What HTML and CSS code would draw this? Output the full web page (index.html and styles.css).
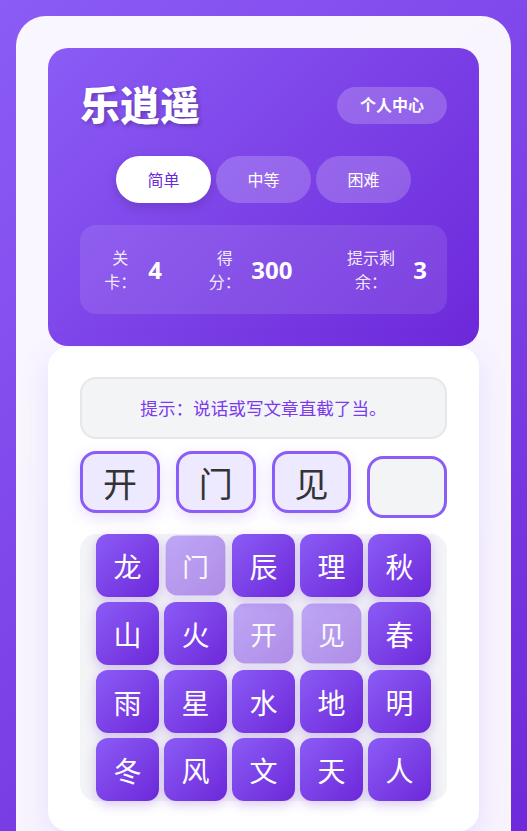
FILE: index.html
```html
<!DOCTYPE html>
<html lang="zh-CN">
<head>
<meta charset="utf-8">
<title>乐逍遥</title>
<link rel="stylesheet" href="styles.css">
</head>
<body>
<div class="app">
  <header class="hero">
    <div class="hero-top">
      <h1 class="title">乐逍遥</h1>
      <button class="profile-btn">个人中心</button>
    </div>
    <div class="levels">
      <button class="level active">简单</button>
      <button class="level">中等</button>
      <button class="level">困难</button>
    </div>
    <div class="stats">
      <div class="stat"><span class="stat-label">关卡：</span><span class="stat-value">4</span></div>
      <div class="stat"><span class="stat-label">得分：</span><span class="stat-value">300</span></div>
      <div class="stat"><span class="stat-label">提示剩余：</span><span class="stat-value">3</span></div>
    </div>
  </header>
  <main class="board">
    <div class="hint">提示：说话或写文章直截了当。</div>
    <div class="slots">
      <div class="slot filled">开</div>
      <div class="slot filled">门</div>
      <div class="slot filled">见</div>
      <div class="slot"></div>
    </div>
    <div class="grid">
      <button class="tile">龙</button>
      <button class="tile used">门</button>
      <button class="tile">辰</button>
      <button class="tile">理</button>
      <button class="tile">秋</button>
      <button class="tile">山</button>
      <button class="tile">火</button>
      <button class="tile used">开</button>
      <button class="tile used">见</button>
      <button class="tile">春</button>
      <button class="tile">雨</button>
      <button class="tile">星</button>
      <button class="tile">水</button>
      <button class="tile">地</button>
      <button class="tile">明</button>
      <button class="tile">冬</button>
      <button class="tile">风</button>
      <button class="tile">文</button>
      <button class="tile">天</button>
      <button class="tile">人</button>
    </div>
  </main>
</div>
</body>
</html>
```
FILE: styles.css
```css
* { box-sizing: border-box; }

html, body { margin: 0; }

body {
  padding: 16px;
  min-height: 100vh;
  background: linear-gradient(135deg, #8b5cf6 0%, #6d28d9 100%);
  font-family: "Noto Sans", "Noto Sans CJK SC", sans-serif;
  color: #333;
}

button {
  font-family: inherit;
  border: none;
  cursor: pointer;
}

.app {
  background: rgba(255, 255, 255, 0.95);
  border-radius: 30px;
  padding: 32px;
}

.hero {
  background: linear-gradient(135deg, #8b5cf6 0%, #6d28d9 100%);
  border-radius: 20px;
  padding: 32px;
  color: #fff;
}

.hero-top {
  display: flex;
  align-items: center;
  justify-content: space-between;
  margin-bottom: 26px;
}

.title {
  margin: 0;
  font-size: 40px;
  line-height: 50px;
  font-weight: 900;
  text-shadow: 2px 2px 4px rgba(0, 0, 0, 0.25);
}

.profile-btn {
  background: rgba(255, 255, 255, 0.2);
  color: #fff;
  font-size: 16px;
  font-weight: 700;
  line-height: 24px;
  padding: 6.5px 23px;
  border-radius: 999px;
}

.levels {
  display: flex;
  justify-content: center;
  gap: 5px;
  margin-bottom: 22px;
}

.level {
  background: rgba(255, 255, 255, 0.2);
  color: #fff;
  font-size: 16px;
  line-height: 24px;
  padding: 11.5px 31.5px;
  border-radius: 999px;
}

.level.active {
  background: #fff;
  color: #6d28d9;
  box-shadow: 0 4px 12px rgba(0, 0, 0, 0.15);
}

.stats {
  display: flex;
  justify-content: space-between;
  gap: 44px;
  padding: 20.5px 20px;
  background: rgba(255, 255, 255, 0.1);
  border-radius: 16px;
}

.stat {
  display: flex;
  align-items: center;
  gap: 8px;
}

.stat-label {
  font-size: 16px;
  line-height: 24px;
  text-align: center;
  color: rgba(255, 255, 255, 0.9);
}

.stat-value {
  flex-shrink: 0;
  font-size: 24px;
  font-weight: 700;
  line-height: 32px;
}

.board {
  margin-top: 1px;
  background: #fff;
  border-radius: 20px;
  padding: 30px 32px;
  box-shadow: 0 10px 30px rgba(139, 92, 246, 0.15);
}

.hint {
  background: #f3f4f6;
  border: 2px solid #e5e7eb;
  border-radius: 16px;
  padding: 16px;
  text-align: center;
  font-size: 17.6px;
  line-height: 1.5;
  color: #7c3aed;
  margin-bottom: 16.5px;
}

.slots {
  display: grid;
  grid-template-columns: repeat(4, 1fr);
  gap: 16px;
  margin-bottom: 16px;
}

.slot {
  height: 62.5px;
  border: 3px solid #8b5cf6;
  border-radius: 16px;
  background: #f3f4f6;
  display: flex;
  align-items: center;
  justify-content: center;
  font-size: 34px;
  color: #333;
}

.slot.filled {
  background: #ede9fe;
  transform: translateY(-5px);
  box-shadow: 0 5px 15px rgba(139, 92, 246, 0.2);
}

.grid {
  display: grid;
  grid-template-columns: repeat(5, 1fr);
  gap: 5px;
  padding: 0 16px;
  background: #f3f4f6;
  border-radius: 16px;
}

.tile {
  aspect-ratio: 1;
  border-radius: 12px;
  background: linear-gradient(135deg, #8b5cf6 0%, #6d28d9 100%);
  color: #fff;
  font-size: 28px;
  padding: 0;
  box-shadow: 0 4px 12px rgba(109, 40, 217, 0.25);
}

.tile.used {
  opacity: 0.5;
  transform: scale(0.95);
}
```
